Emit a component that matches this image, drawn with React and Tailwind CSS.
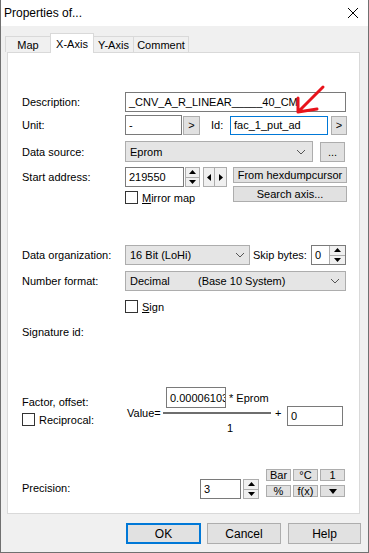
function Chevron() {
    return (
        <svg width="10" height="6" viewBox="0 0 10 6">
            <path d="M1 1 L5 5 L9 1" fill="none" stroke="#555" strokeWidth="1" />
        </svg>
    );
}

function Spin({ className = "" }) {
    return (
        <div className={`flex flex-col border border-[#adadad] bg-[#f0f0f0] ${className}`}>
            <div className="flex flex-1 items-center justify-center border-b border-[#adadad]">
                <svg width="7" height="4" viewBox="0 0 7 4"><path d="M3.5 0 L7 4 L0 4 Z" fill="#000" /></svg>
            </div>
            <div className="flex flex-1 items-center justify-center">
                <svg width="7" height="4" viewBox="0 0 7 4"><path d="M0 0 L7 0 L3.5 4 Z" fill="#000" /></svg>
            </div>
        </div>
    );
}

function CheckBox() {
    return <div className="w-[13px] h-[13px] border border-[#333] bg-white shrink-0" />;
}

function Button({ className = "", children }) {
    return (
        <div className={`flex items-center justify-center border border-[#adadad] bg-[#e1e1e1] ${className}`}>
            {children}
        </div>
    );
}

function Label({ children }) {
    return <div className="w-[103px] shrink-0 flex items-center">{children}</div>;
}

export default function App() {
    return (
        <div className="relative w-[369px] h-[553px] flex flex-col border-x border-b border-[#707070] bg-[#f0f0f0] text-[11px] text-black font-['Liberation_Sans',Arial,sans-serif] leading-[14px]">
            {/* title bar */}
            <div className="h-[26px] bg-white flex items-center justify-between pl-[3px] pr-[9px]">
                <span className="text-[12px]">Properties of...</span>
                <svg width="12" height="12" viewBox="0 0 12 12">
                    <path d="M1 1 L11 11 M11 1 L1 11" stroke="#000" strokeWidth="1" />
                </svg>
            </div>

            <div className="pt-[7px] flex flex-col">
                {/* tabs */}
                <div className="h-[19px] flex items-end pl-[4px]">
                    <div className="w-[45px] h-[16px] flex items-center justify-center border-t border-l border-[#d9d9d9] bg-[#f0f0f0]">Map</div>
                    <div className="relative z-10 -mb-px w-[44px] h-[20px] flex items-center justify-center border-t border-x border-[#d9d9d9] bg-white">X-Axis</div>
                    <div className="w-[40px] h-[16px] flex items-center justify-center border-t border-r border-[#d9d9d9] bg-[#f0f0f0]">Y-Axis</div>
                    <div className="w-[55px] h-[16px] flex items-center justify-center border-t border-r border-[#d9d9d9] bg-[#f0f0f0]">Comment</div>
                </div>

                {/* tab page */}
                <div className="ml-[6px] w-[353px] h-[462px] border border-[#d9d9d9] bg-white pl-[14px] flex flex-col">
                    <div className="mt-[39px] h-[20px] flex">
                        <Label>Description:</Label>
                        <div className="w-[221px] h-[20px] border border-[#7a7a7a] px-[3px] flex items-center whitespace-nowrap overflow-hidden">_CNV_A_R_LINEAR_____40_CM</div>
                    </div>

                    <div className="mt-[3px] h-[20px] flex items-center">
                        <Label>Unit:</Label>
                        <div className="w-[57px] h-[20px] border border-[#7a7a7a] px-[3px] flex items-center">-</div>
                        <Button className="ml-[1px] w-[17px] h-[19px]">&gt;</Button>
                        <div className="ml-[11px] w-[19px]">Id:</div>
                        <div className="w-[98px] h-[19px] border border-[#0078d7] px-[3px] flex items-center">fac_1_put_ad</div>
                        <Button className="ml-[3px] w-[16px] h-[19px]">&gt;</Button>
                    </div>

                    <div className="mt-[6px] h-[21px] flex items-center">
                        <Label>Data source:</Label>
                        <div className="w-[188px] h-[21px] border border-[#adadad] bg-[#e5e5e5] pl-[4px] pr-[6px] flex items-center justify-between">
                            <span>Eprom</span>
                            <Chevron />
                        </div>
                        <Button className="ml-[7px] w-[25px] h-[20px]">...</Button>
                    </div>

                    <div className="mt-[5px] flex items-start">
                        <Label><div className="h-[20px] flex items-center">Start address:</div></Label>
                        <div className="w-[108px] flex flex-col">
                            <div className="flex">
                                <div className="w-[59px] h-[20px] border border-[#7a7a7a] px-[3px] flex items-center">219550</div>
                                <Spin className="ml-[1px] w-[15px] h-[20px]" />
                                <div className="ml-[3px] flex">
                                    <div className="w-[12px] h-[20px] border border-[#adadad] bg-[#f0f0f0] flex items-center justify-center">
                                        <svg width="4" height="7" viewBox="0 0 4 7"><path d="M4 0 L4 7 L0 3.5 Z" fill="#000" /></svg>
                                    </div>
                                    <div className="w-[12px] h-[20px] border border-l-0 border-[#adadad] bg-[#f0f0f0] flex items-center justify-center">
                                        <svg width="4" height="7" viewBox="0 0 4 7"><path d="M0 0 L4 3.5 L0 7 Z" fill="#000" /></svg>
                                    </div>
                                </div>
                            </div>
                            <div className="mt-[4px] h-[13px] flex items-center">
                                <CheckBox />
                                <span className="ml-[4px]"><span className="underline">M</span>irror map</span>
                            </div>
                        </div>
                        <div className="w-[114px] flex flex-col">
                            <Button className="h-[16px]">From hexdumpcursor</Button>
                            <Button className="mt-[3px] h-[16px]">Search axis...</Button>
                        </div>
                    </div>

                    <div className="mt-[41px] h-[20px] flex items-center">
                        <Label>Data organization:</Label>
                        <div className="w-[125px] h-[20px] border border-[#adadad] bg-[#e5e5e5] pl-[4px] pr-[4px] flex items-center justify-between">
                            <span>16 Bit (LoHi)</span>
                            <Chevron />
                        </div>
                        <div className="ml-[3px] w-[58px]">Skip bytes:</div>
                        <div className="w-[35px] h-[20px] border border-[#7a7a7a] flex">
                            <div className="flex-1 pl-[3px] flex items-center">0</div>
                            <Spin className="w-[16px] h-full border-y-0 border-r-0" />
                        </div>
                    </div>

                    <div className="mt-[6px] h-[20px] flex items-center">
                        <Label>Number format:</Label>
                        <div className="w-[221px] h-[20px] border border-[#adadad] bg-[#e5e5e5] pl-[4px] pr-[5px] flex items-center">
                            <span className="w-[68px]">Decimal</span>
                            <span className="flex-1">(Base 10 System)</span>
                            <Chevron />
                        </div>
                    </div>

                    <div className="mt-[9px] h-[13px] pl-[103px] flex items-center">
                        <CheckBox />
                        <span className="ml-[4px]"><span className="underline">S</span>ign</span>
                    </div>

                    <div className="mt-[12px] h-[14px]">Signature id:</div>

                    <div className="mt-[48px] flex items-start">
                        <div className="w-[103px] flex flex-col">
                            <div className="mt-[8px] h-[14px]">Factor, offset:</div>
                            <div className="mt-[4px] h-[13px] flex items-center">
                                <CheckBox />
                                <span className="ml-[4px]">Reciprocal:</span>
                            </div>
                        </div>
                        <div className="ml-[2px] w-[36px] mt-[19px] h-[14px]">Value=</div>
                        <div className="w-[108px] flex flex-col">
                            <div className="flex items-center">
                                <div className="ml-[3px] w-[60px] h-[21px] border border-[#7a7a7a] px-[3px] flex items-center overflow-hidden whitespace-nowrap">0.00006103</div>
                                <span className="ml-[3px]">* Eprom</span>
                            </div>
                            <div className="mt-[4px] h-[2px] bg-[#6e6e6e]" />
                            <div className="mt-[7px] h-[14px] pl-[64px]">1</div>
                        </div>
                        <div className="w-[16px] mt-[19px] h-[14px] pl-[4px]">+</div>
                        <div className="mt-[19px] w-[56px] h-[20px] border border-[#7a7a7a] px-[3px] flex items-center">0</div>
                    </div>

                    <div className="mt-[34px] flex items-start">
                        <div className="w-[103px] mt-[12px] h-[14px]">Precision:</div>
                        <div className="ml-[75px] mt-[10px] w-[41px] h-[20px] border border-[#7a7a7a] px-[3px] flex items-center">3</div>
                        <Spin className="ml-[2px] mt-[10px] w-[16px] h-[20px]" />
                        <div className="ml-[7px] grid grid-cols-[25px_25px_25px] gap-x-[2px] gap-y-[4px] text-[11px] leading-[10px]">
                            <Button className="h-[12px]">Bar</Button>
                            <Button className="h-[12px]">°C</Button>
                            <Button className="h-[12px]">1</Button>
                            <Button className="h-[12px]">%</Button>
                            <Button className="h-[12px]">f(x)</Button>
                            <Button className="h-[12px]">
                                <svg width="8" height="5" viewBox="0 0 8 5"><path d="M0 0 L8 0 L4 5 Z" fill="#000" /></svg>
                            </Button>
                        </div>
                    </div>
                </div>

                {/* dialog buttons */}
                <div className="mt-[9px] pl-[125px] flex">
                    <div className="w-[75px] h-[21px] border-2 border-[#0078d7] bg-[#e1e1e1] flex items-center justify-center text-[12px]">OK</div>
                    <Button className="ml-[6px] w-[74px] h-[21px] text-[12px]">Cancel</Button>
                    <Button className="ml-[7px] w-[73px] h-[21px] text-[12px]">Help</Button>
                </div>
            </div>

            {/* red annotation arrow */}
            <svg className="absolute left-[290px] top-[80px]" width="40" height="40" viewBox="0 0 40 40">
                <path d="M32 7 L7 32 M7 32 L7 18 M7 32 L26 29" fill="none" stroke="#e8131b" strokeWidth="3" strokeLinecap="round" strokeLinejoin="round" />
            </svg>
        </div>
    );
}
